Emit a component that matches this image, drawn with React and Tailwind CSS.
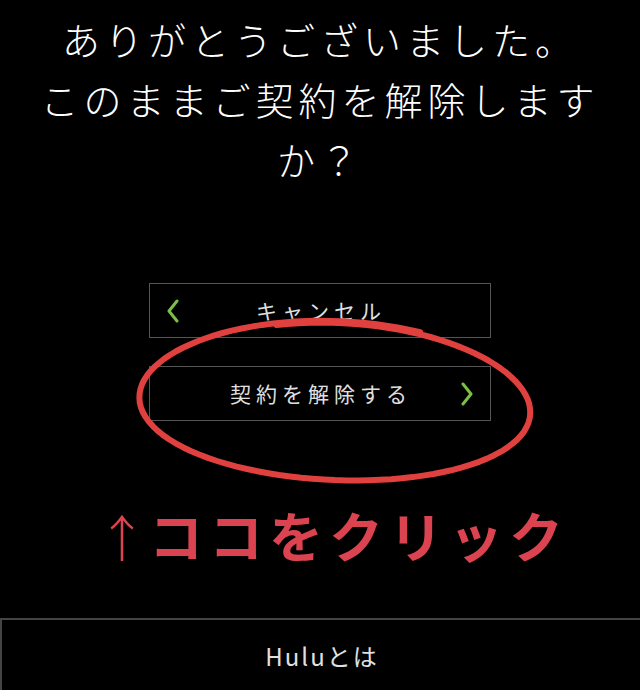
import React from "react";

function ellipsePath() {
  const cx = 336;
  const cy = 402;
  const rx = 198;
  const ry = 80;
  const rot = (2.5 * Math.PI) / 180;
  const start = -1.15;
  const sweep = -(2 * Math.PI + 0.75);
  const n = 120;
  const pts = [];
  for (let i = 0; i <= n; i++) {
    const f = i / n;
    const t = start + sweep * f;
    const k = 1 - 0.025 * f + 0.012 * Math.sin(3 * t);
    const x0 = rx * k * Math.cos(t);
    const y0 = ry * k * Math.sin(t);
    const x = cx + x0 * Math.cos(rot) - y0 * Math.sin(rot);
    const y = cy + x0 * Math.sin(rot) + y0 * Math.cos(rot);
    pts.push([x, y]);
  }
  return "M " + pts.map((p) => `${p[0].toFixed(1)} ${p[1].toFixed(1)}`).join(" L ");
}

const jp = { fontFamily: '"Noto Sans CJK JP", "Noto Sans", sans-serif' };

export default function App() {
  return (
    <div className="relative w-[640px] h-[690px] bg-black overflow-hidden" style={jp}>
      <div className="pt-[9px] text-center text-white text-[38px] leading-[60px] tracking-[5px] font-light">
        ありがとうございました。
        <br />
        このままご契約を解除します
        <br />
        か？
      </div>

      <div className="mt-[94px] flex flex-col items-center gap-[28px]">
        <div className="w-[342px] h-[55px] border border-[#555555] flex items-center px-[16px]">
          <svg width="14" height="24" viewBox="0 0 14 24" className="shrink-0">
            <polyline points="11,2 3,12 11,22" fill="none" stroke="#7cbf45" strokeWidth="3" strokeLinecap="round" strokeLinejoin="round" />
          </svg>
          <span className="flex-1 text-center text-[#e0e0e0] text-[21px] tracking-[5px] pr-[12px]">キャンセル</span>
        </div>
        <div className="w-[342px] h-[55px] border border-[#555555] flex items-center px-[16px]">
          <span className="flex-1 text-center text-[#e0e0e0] text-[21px] tracking-[5px] pl-[16px]">契約を解除する</span>
          <svg width="14" height="24" viewBox="0 0 14 24" className="shrink-0">
            <polyline points="3,2 11,12 3,22" fill="none" stroke="#7cbf45" strokeWidth="3" strokeLinecap="round" strokeLinejoin="round" />
          </svg>
        </div>
      </div>

      <div className="mt-[84px] flex justify-center items-center text-[#dc4350] leading-none h-[60px] pl-[26px]">
        <span className="text-[50px] font-light mr-[2px]">↑</span>
        <span className="text-[54px] font-bold tracking-[6px]">ココをクリック</span>
      </div>

      <div className="absolute left-0 right-[-2px] top-[618px] bottom-[-2px] border-t-2 border-l-2 border-[#444444] flex justify-center pt-[21px]">
        <span className="text-[#e0e0e0] text-[24px] leading-[30px] tracking-[2px]">Huluとは</span>
      </div>

      <svg className="absolute inset-0 pointer-events-none" width="640" height="690" viewBox="0 0 640 690">
        <path d={ellipsePath()} fill="none" stroke="#e0413f" strokeWidth="6" strokeLinecap="round" strokeLinejoin="round" />
      </svg>
    </div>
  );
}
